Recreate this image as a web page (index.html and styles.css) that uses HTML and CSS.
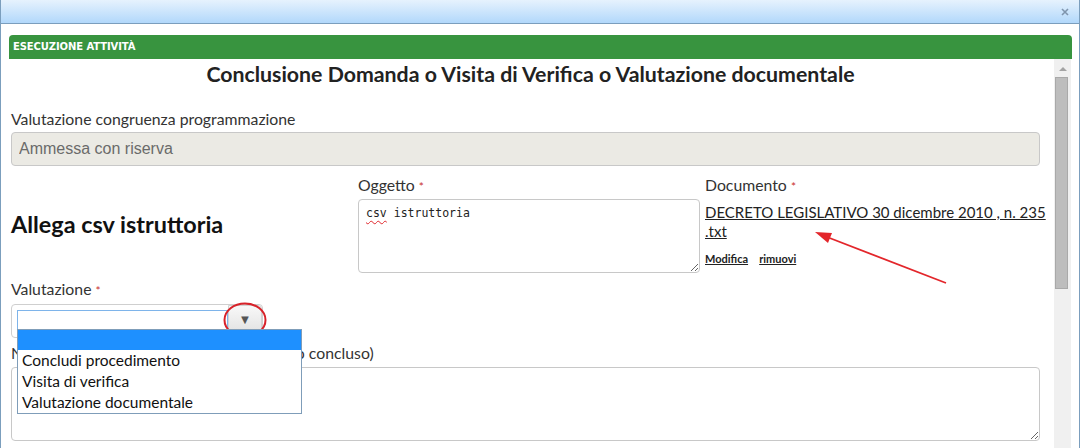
FILE: index.html
```html
<!DOCTYPE html>
<html lang="it">
<head>
  <meta charset="UTF-8">
  <title>Esecuzione attività</title>
  <link rel="stylesheet" href="styles.css">
</head>
<body>

  <div class="window">
    <div class="titlebar">
      <svg class="close" width="8" height="8" viewBox="0 0 8 8">
        <path d="M1 1 L7 7 M7 1 L1 7" stroke="#7f95ad" stroke-width="1.6"/>
      </svg>
    </div>

    <div class="panel">
      <div class="panel-head">ESECUZIONE ATTIVITÀ</div>
      <div class="panel-body">
        <div class="content">
          <h1>Conclusione Domanda o Visita di Verifica o Valutazione documentale</h1>

          <div class="field first">
            <label>Valutazione congruenza programmazione</label>
            <input type="text" class="readonly" value="Ammessa con riserva" disabled>
          </div>

          <div class="attach-row">
            <div class="attach-title">
              <h2>Allega csv istruttoria</h2>
            </div>
            <div class="attach-col">
              <label>Oggetto <span class="req">*</span></label>
              <div class="textbox"><span class="typo">csv</span> istruttoria</div>
            </div>
            <div class="attach-col">
              <label>Documento <span class="req">*</span></label>
              <a href="#" class="doc-link">DECRETO LEGISLATIVO 30 dicembre 2010 , n. 235<br>.txt</a>
              <div class="doc-actions">
                <a href="#">Modifica</a>
                <a href="#">rimuovi</a>
              </div>
            </div>
          </div>

          <div class="field combo-field">
            <label>Valutazione <span class="req">*</span></label>
            <div class="combo">
              <input type="text" class="combo-input">
              <span class="combo-btn">&#9660;</span>
              <ul class="combo-list">
                <li class="active">&nbsp;</li>
                <li>Concludi procedimento</li>
                <li>Visita di verifica</li>
                <li>Valutazione documentale</li>
              </ul>
            </div>
          </div>

          <div class="field note-field">
            <label>Note (obbligatorie in caso di procedimento concluso)</label>
            <textarea class="note"></textarea>
          </div>
        </div>

        <div class="scrollbar">
          <span class="sb-up"></span>
          <span class="sb-thumb"></span>
        </div>
      </div>
    </div>

    <!-- segni rossi sopra il modulo -->
    <svg class="marks" width="1081" height="448" viewBox="0 0 1081 448">
      <line x1="827" y1="237" x2="946" y2="283" stroke="#e3262b" stroke-width="1.8"/>
      <polygon points="815,232 828,243 832,233" fill="#e3262b"/>
      <ellipse cx="245" cy="320" rx="20.5" ry="16.5" fill="none" stroke="#d8232a" stroke-width="2"/>
    </svg>
  </div>

</body>
</html>
```

FILE: styles.css
```css
* {
  box-sizing: border-box;
}
body {
  margin: 0;
  width: 1081px;
  height: 448px;
  overflow: hidden;
  background-color: #fff;
  font-family: Lato, "Noto Sans", sans-serif;
  color: #333;
}
.window {
  position: relative;
  width: 1080px;
  height: 448px;
  border-left: 1px solid #7b9ebd;
  border-right: 1px solid #7b9ebd;
}
.titlebar {
  height: 24px;
  background: linear-gradient(#e6f2fd, #b2d8fb);
  border-bottom: 1px solid #7b9ebd;
  display: flex;
  justify-content: flex-end;
  align-items: center;
  padding-right: 10px;
}
.panel {
  padding: 11px 7px 0 8px;
}
.panel-head {
  height: 24px;
  line-height: 24px;
  padding-left: 4px;
  background-color: #38943f;
  border-radius: 4px 4px 0 0;
  color: #fff;
  font-family: "DejaVu Sans", sans-serif;
  font-weight: bold;
  font-size: 10px;
  letter-spacing: -0.1px;
}
.panel-body {
  display: flex;
  height: 389px;
}
.content {
  flex: 1;
  min-width: 0;
  padding: 0 14px 0 2px;
}
h1 {
  margin: 0;
  padding-left: 10px;
  font-size: 21.3px;
  line-height: 30px;
  text-align: center;
  color: #222;
}
label {
  display: block;
  font-size: 15.8px;
  line-height: 20px;
  color: #333;
}
.req {
  color: #c9302c;
  font-size: 12px;
}
.field.first {
  margin-top: 20px;
}
.readonly {
  display: block;
  width: 100%;
  height: 34px;
  margin-top: 3px;
  padding: 0 7px;
  border: 1px solid #c8c8c8;
  border-radius: 4px;
  background-color: #ebeae4;
  color: #6a6a6a;
  font-family: "Liberation Sans", Arial, sans-serif;
  font-size: 16px;
}
.attach-row {
  display: grid;
  grid-template-columns: 347px 347px minmax(0, 1fr);
  margin-top: 9px;
}
.attach-title {
  display: flex;
  align-items: center;
}
.attach-title h2 {
  margin: 0;
  font-size: 23.4px;
  color: #111;
}
.textbox {
  width: 342px;
  height: 74px;
  margin-top: 2px;
  padding: 6px 7px;
  border: 1px solid #c8c8c8;
  border-radius: 4px;
  font-family: "DejaVu Sans Mono", monospace;
  font-size: 11.5px;
  color: #222;
  overflow: auto;
  resize: both;
}
.typo {
  text-decoration: underline wavy #e0282d;
  text-decoration-thickness: 1px;
  text-underline-offset: 3px;
}
.doc-link {
  display: block;
  margin-top: 6px;
  font-size: 15px;
  line-height: 19px;
  color: #222;
  white-space: nowrap;
}
.doc-actions {
  margin-top: 7px;
  line-height: 18px;
}
.doc-actions a {
  font-size: 11px;
  font-weight: bold;
  color: #222;
  margin-right: 7px;
}
.combo-field {
  margin-top: 6px;
}
.combo {
  position: relative;
  display: flex;
  align-items: flex-start;
  width: 252px;
  height: 34px;
  margin-top: 3px;
  border: 1px solid #cfcfcf;
  border-radius: 4px;
}
.combo-input {
  width: 211px;
  height: 20px;
  margin: 5px 0 0 5px;
  border: 1px solid #7eb4ea;
  outline: none;
}
.combo-btn {
  width: 34px;
  height: 29px;
  border: 1px solid #d3d3d3;
  border-radius: 0 4px 4px 0;
  background: linear-gradient(#f8f8f8, #e2e2e2);
  color: #555;
  font-size: 13px;
  text-align: center;
  line-height: 27px;
}
.combo-list {
  position: absolute;
  left: 5px;
  top: 24px;
  width: 285px;
  margin: 0;
  padding: 0;
  list-style: none;
  background-color: #fff;
  border: 1px solid #7f9db9;
  z-index: 2;
}
.combo-list li {
  padding-left: 4px;
  font-size: 15.5px;
  line-height: 21px;
  color: #111;
}
.combo-list li.active {
  background-color: #1e90ff;
  line-height: 20px;
}
.note-field {
  margin-top: 5px;
}
.note {
  display: block;
  width: 100%;
  height: 74px;
  margin-top: 4px;
  border: 1px solid #c8c8c8;
  border-radius: 4px;
}
.scrollbar {
  position: relative;
  width: 17px;
  margin-right: 1px;
  background-color: #f0f0f0;
}
.sb-up {
  position: absolute;
  left: 5px;
  top: 8px;
  border-left: 4px solid transparent;
  border-right: 4px solid transparent;
  border-bottom: 4px solid #a3a3a3;
}
.sb-thumb {
  position: absolute;
  left: 1px;
  top: 18px;
  width: 13px;
  height: 212px;
  background-color: #bdbdbd;
  border: 1px solid #a9a9a9;
}
.marks {
  position: absolute;
  left: -1px;
  top: 0;
  pointer-events: none;
}
```
